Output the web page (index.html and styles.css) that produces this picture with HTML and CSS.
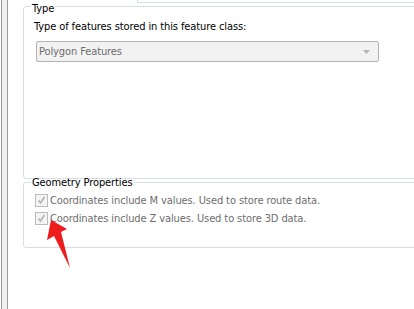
FILE: index.html
```html
<!DOCTYPE html>
<html>
<head>
<meta charset="utf-8">
<link rel="stylesheet" href="styles.css">
</head>
<body>
<div class="page">
  <div class="rail"></div>
  <div class="content">
    <div class="top-stub"></div>
    <fieldset class="group type-group">
      <legend>Type</legend>
      <div class="label">Type of features stored in this feature class:</div>
      <div class="combo">
        <span>Polygon Features</span>
        <svg class="arrow-dd" width="7" height="4" viewBox="0 0 7 4"><path d="M0 0h7L3.5 4z" fill="#b4b4b4"/></svg>
      </div>
    </fieldset>
    <fieldset class="group geo-group">
      <legend>Geometry Properties</legend>
      <label class="check"><span class="box"><svg width="11" height="11" viewBox="0 0 11 11"><path d="M2.5 5.5l2 2.5 4-6" fill="none" stroke="#b0b0b0" stroke-width="1.6"/></svg></span>Coordinates include M values. Used to store route data.</label>
      <label class="check"><span class="box"><svg width="11" height="11" viewBox="0 0 11 11"><path d="M2.5 5.5l2 2.5 4-6" fill="none" stroke="#b0b0b0" stroke-width="1.6"/></svg></span>Coordinates include Z values. Used to store 3D data.</label>
    </fieldset>
  </div>
  <svg class="red-arrow" width="414" height="309" viewBox="0 0 414 309">
    <polygon points="51,220 47,240 54,236 70,268 61,232 67,229" fill="#ee1c1c"/>
  </svg>
</div>
</body>
</html>
```
FILE: styles.css
```css
html, body {
  margin: 0;
  padding: 0;
  background: #ffffff;
  overflow: hidden;
}
body {
  width: 414px;
  height: 309px;
  font-family: "DejaVu Sans Condensed", "DejaVu Sans", "Liberation Sans", sans-serif;
  font-size: 11px;
  letter-spacing: -0.1px;
  color: #000;
}
.page {
  position: relative;
  display: flex;
  width: 414px;
  height: 309px;
}
.rail {
  flex: 0 0 auto;
  width: 5px;
  margin-left: 1px;
  height: 309px;
  background: #f0f0f0;
  border-left: 1px solid #9a9a9a;
  border-right: 1px solid #9a9a9a;
}
.content {
  flex: 1 1 auto;
  padding-left: 15px;
  display: flex;
  flex-direction: column;
}
.top-stub {
  height: 2px;
  margin-left: 114px;
  margin-right: -10px;
  border-left: 1px solid #d5dfe5;
  border-bottom: 1px solid #d5dfe5;
}
.group {
  margin: 0 -20px 0 0;
  border: 1px solid #d5dfe5;
  border-radius: 3px;
  padding: 0 0 0 10px;
  min-width: 0;
}
.group legend {
  padding: 0 1px;
  margin-left: -3px;
  line-height: 13px;
  height: 13px;
}
.type-group {
  margin-top: -5px;
  height: 179px;
}
.type-group legend {
  padding-top: 4px;
}
.label {
  margin-top: 5px;
  line-height: 13px;
}
.combo {
  margin-top: 8px;
  margin-left: 2px;
  width: 331px;
  height: 19px;
  border: 1px solid #b4b4b4;
  border-radius: 2px;
  background: #f2f2f2;
  color: #6d6d6d;
  display: flex;
  align-items: center;
  justify-content: space-between;
  padding: 0 8px 0 2px;
  box-sizing: content-box;
}
.geo-group {
  margin-top: -3px;
  height: 70px;
}
.check {
  display: flex;
  align-items: center;
  color: #6d6d6d;
  height: 18px;
  line-height: 13px;
}
.check:first-of-type {
  margin-top: 2px;
}
.box {
  width: 11px;
  height: 11px;
  margin-left: 1px;
  border: 1px solid #bcbcbc;
  background: #f4f4f4;
  margin-right: 2px;
  display: flex;
}
.red-arrow {
  position: absolute;
  left: 0;
  top: 0;
  pointer-events: none;
}
```
